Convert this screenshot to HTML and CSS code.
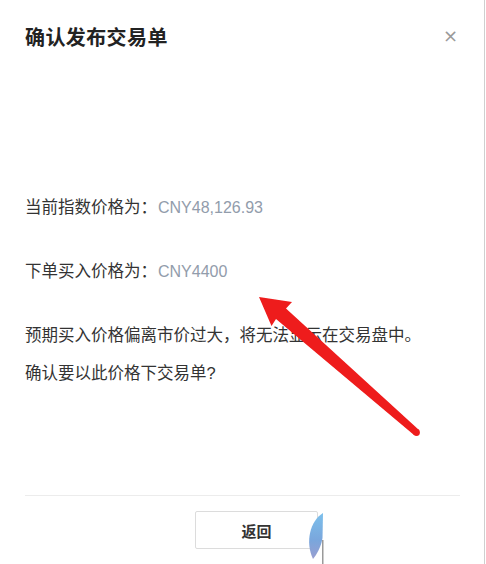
FILE: index.html
```html
<!DOCTYPE html>
<html lang="zh-CN">
<head>
<meta charset="utf-8">
<title>确认发布交易单</title>
<link rel="stylesheet" href="styles.css">
</head>
<body>
<div class="dialog">
  <header class="dialog-header">
    <h1 class="dialog-title">确认发布交易单</h1>
    <span class="dialog-close">×</span>
  </header>
  <section class="dialog-body">
    <p class="line line-first">当前指数价格为：<span class="value">CNY48,126.93</span></p>
    <p class="line line-gap">下单买入价格为：<span class="value">CNY4400</span></p>
    <p class="line line-gap">预期买入价格偏离市价过大，将无法显示在交易盘中。</p>
    <p class="line line-tight">确认要以此价格下交易单?</p>
  </section>
  <footer class="dialog-footer">
    <div class="divider"></div>
    <div class="actions">
      <button class="btn-back">返回</button>
    </div>
  </footer>

  <svg class="watermark" width="24" height="56" viewBox="0 0 24 56">
    <defs>
      <linearGradient id="wm" x1="0" y1="0" x2="0" y2="1">
        <stop offset="0" stop-color="#7cc0ec"/>
        <stop offset="0.6" stop-color="#7aa6dc"/>
        <stop offset="1" stop-color="#9a9ed0"/>
      </linearGradient>
    </defs>
    <path d="M18 3 C5 11 0 32 8 49 C12 44 16 37 17.5 28 Z" fill="url(#wm)"/>
    <rect x="17" y="30" width="1.5" height="26" fill="#9a9a9a"/>
  </svg>

  <svg class="arrow" width="486" height="564" viewBox="0 0 486 564">
    <defs>
      <filter id="soft" x="-10%" y="-10%" width="120%" height="120%">
        <feGaussianBlur stdDeviation="0.6"/>
      </filter>
    </defs>
    <g fill="#ee1b1b" filter="url(#soft)">
      <polygon points="259,297 292,302 286,308.5 419,430 414,435 276,319 271.5,326"/>
      <circle cx="416.5" cy="432.5" r="3.4"/>
    </g>
  </svg>
</div>
</body>
</html>
```
FILE: styles.css
```css
html, body {
  margin: 0;
  padding: 0;
  background: #ffffff;
}

body {
  font-family: "Liberation Sans", "Noto Sans CJK SC", sans-serif;
  color: #333333;
}

.dialog {
  position: relative;
  width: 484px;
  height: 564px;
  border-right: 1px solid #cfcfcf;
  background: #ffffff;
  overflow: hidden;
}

.dialog-header {
  height: 72px;
  display: flex;
  align-items: center;
  justify-content: space-between;
  padding: 0 26px 0 25px;
}

.dialog-title {
  margin: 0;
  font-size: 20px;
  font-weight: bold;
  color: #222222;
  letter-spacing: 0.4px;
}

.dialog-close {
  font-size: 18px;
  color: #9a9a9a;
  line-height: 1;
  font-family: "DejaVu Sans", sans-serif;
}

.dialog-body {
  padding: 123px 25px 0 25px;
}

.line {
  margin: 0;
  font-size: 16.5px;
  line-height: 24px;
  color: #333333;
  white-space: nowrap;
}

.line-gap {
  margin-top: 39px;
}

.line-tight {
  margin-top: 14px;
}

.value {
  color: #929cab;
  font-size: 16px;
  margin-left: 1px;
}

.dialog-footer {
  margin-top: 110px;
}

.divider {
  height: 1px;
  background: #ececec;
  margin: 0 24px 0 25px;
}

.actions {
  display: flex;
  padding-top: 15px;
  padding-left: 195px;
}

.btn-back {
  width: 123px;
  height: 38px;
  border: 1px solid #dcdcdc;
  background: #ffffff;
  border-radius: 2px;
  font-family: "Noto Sans CJK SC", sans-serif;
  font-size: 15px;
  font-weight: bold;
  color: #333333;
  padding: 0;
}

.watermark {
  position: absolute;
  left: 305px;
  top: 510px;
}

.arrow {
  position: absolute;
  left: 0;
  top: 0;
  pointer-events: none;
}
```
